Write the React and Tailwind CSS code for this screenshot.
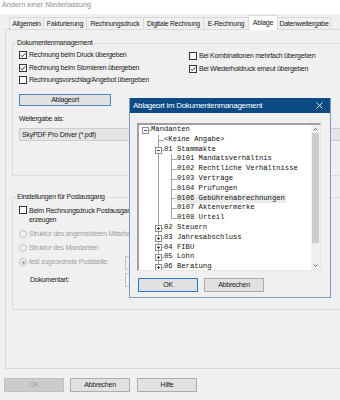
import React from 'react';

function Check({ checked }) {
  return (
    <span className="flex h-[8px] w-[8px] shrink-0 items-center justify-center border border-[#333333] bg-white">
      {checked && (
        <svg width="6" height="6" viewBox="0 0 6 6">
          <path d="M0.6 3.1 L2.3 4.7 L5.4 1.2" fill="none" stroke="#222222" strokeWidth="0.9" />
        </svg>
      )}
    </span>
  );
}

function CheckRow({ checked, children }) {
  return (
    <div className="flex h-[12.5px] items-center gap-[2px]">
      <Check checked={checked} />
      <span className="whitespace-nowrap leading-[10px]">{children}</span>
    </div>
  );
}

function Radio({ checked }) {
  return (
    <span className="flex h-[8px] w-[8px] shrink-0 items-center justify-center rounded-full border border-[#c2c2c2] bg-[#f0f0f0]">
      {checked && <span className="h-[3px] w-[3px] rounded-full bg-[#a6a6a6]" />}
    </span>
  );
}

const rows = [
  { l: 0, t: 'Mandanten', box: 'minus' },
  { l: 1, t: '<Keine Angabe>' },
  { l: 1, t: '01 Stammakte', box: 'minus' },
  { l: 2, t: '0101 Mandatsverhältnis' },
  { l: 2, t: '0102 Rechtliche Verhältnisse' },
  { l: 2, t: '0103 Verträge' },
  { l: 2, t: '0104 Prüfungen' },
  { l: 2, t: '0106 Gebührenabrechnungen', sel: true },
  { l: 2, t: '0107 Aktenvermerke' },
  { l: 2, t: '0108 Urteil', last: true },
  { l: 1, t: '02 Steuern', box: 'plus' },
  { l: 1, t: '03 Jahresabschluss', box: 'plus' },
  { l: 1, t: '04 FIBU', box: 'plus' },
  { l: 1, t: '05 Lohn', box: 'plus' },
  { l: 1, t: '06 Beratung', box: 'plus' },
];

function Conn({ r }) {
  const W = 12 + 13 * r.l;
  const J = 6 + 13 * r.l + 0.5;
  const line = '#a3a3a3';
  const els = [];
  if (r.l === 2) els.push(<line key="a" x1={19.5} y1={-0.5} x2={19.5} y2={10.5} stroke={line} />);
  if (r.box) {
    if (r.l > 0) {
      els.push(<line key="u" x1={J} y1={-0.5} x2={J} y2={2.5} stroke={line} />);
      els.push(<line key="d" x1={J} y1={8.5} x2={J} y2={10.5} stroke={line} />);
    }
    els.push(<line key="h" x1={J + 3.5} y1={5.5} x2={W - 0.5} y2={5.5} stroke={line} />);
    els.push(<rect key="b" x={J - 3} y={2.5} width={6} height={6} fill="#ffffff" stroke="#8e8e8e" />);
    els.push(<line key="m" x1={J - 1.5} y1={5.5} x2={J + 1.5} y2={5.5} stroke="#2f4f7a" />);
    if (r.box === 'plus') els.push(<line key="p" x1={J} y1={4} x2={J} y2={7} stroke="#2f4f7a" />);
  } else {
    els.push(<line key="v" x1={J} y1={-0.5} x2={J} y2={r.last ? 5.5 : 10.5} stroke={line} />);
    els.push(<line key="h" x1={J} y1={5.5} x2={W - 0.5} y2={5.5} stroke={line} />);
  }
  return (
    <svg width={W} height={10} className="shrink-0 overflow-visible" shapeRendering="crispEdges">
      {els}
    </svg>
  );
}

const tabs = [
  { t: 'Allgemein', w: 'w-[34px] border-l' },
  { t: 'Fakturierung', w: 'w-[43px] border-l' },
  { t: 'Rechnungsdruck', w: 'w-[57px] border-l' },
  { t: 'Digitale Rechnung', w: 'w-[60px] border-l' },
  { t: 'E-Rechnung', w: 'w-[45px] border-l' },
];

export default function App() {
  return (
    <div className="relative h-[400px] w-[340px] overflow-hidden bg-[#f0f0f0] font-['Liberation_Sans',Arial,sans-serif] text-[7px] tracking-[-0.25px] text-[#1b1b1b]">
      {/* window title */}
      <div className="h-[14px] bg-white pl-[2px] text-[7.2px] leading-[10px] tracking-normal text-[#8e8e8e]">
        Ändern einer Niederlassung
      </div>

      {/* tab strip */}
      <div className="flex h-[15px] items-end pl-[9px]">
        {tabs.map((tb) => (
          <div
            key={tb.t}
            className={'flex h-[12px] items-center justify-center whitespace-nowrap border-t border-[#d9d9d9] bg-[#f0f0f0] leading-[10px] ' + tb.w}
          >
            {tb.t}
          </div>
        ))}
        <div className="relative z-10 -mb-[1px] flex h-[15px] w-[30px] items-start justify-center border-x border-t border-[#d9d9d9] bg-white pt-[2px] leading-[10px]">
          Ablage
        </div>
        <div className="flex h-[12px] w-[53px] items-center justify-center whitespace-nowrap border-r border-t border-[#d9d9d9] leading-[10px]">
          Datenweitergabe
        </div>
      </div>

      {/* tab page */}
      <div className="ml-[5px] h-[340px] w-[340px] border border-[#d9d9d9] bg-[#f0f0f0] pl-[6px] pt-[8px]">
        <fieldset className="h-[138px] w-[330px] border border-[#dcdcdc]">
          <legend className="ml-[3px] px-[1px] leading-[10px]">Dokumentenmanagement</legend>
          <div className="pl-[6px] pt-[1px]">
            <div className="flex">
              <div className="w-[170px]">
                <CheckRow checked>Rechnung beim Druck übergeben</CheckRow>
                <CheckRow checked>Rechnung beim Stornieren übergeben</CheckRow>
                <CheckRow>Rechnungsvorschlag/Angebot übergeben</CheckRow>
              </div>
              <div className="pt-[1px]">
                <CheckRow>Bei Kombinationen mehrfach übergeben</CheckRow>
                <CheckRow checked>Bei Wiederholdruck erneut übergeben</CheckRow>
              </div>
            </div>
            <div className="mt-[7.5px] flex h-[12px] w-[92px] items-center justify-center border border-[#4b86c0] bg-[#e1e1e1] leading-[10px]">
              Ablageort
            </div>
            <div className="mt-[7px] h-[12px] leading-[12px]">Weitergabe als:</div>
            <div className="mt-[3px] flex h-[13px] w-[330px] items-center border border-[#cccccc] bg-[#e5e5e5] pl-[2px] leading-[10px]">
              SkyPDF Pro Driver (*.pdf)
            </div>
          </div>
        </fieldset>

        <fieldset className="mt-[16px] h-[118px] w-[330px] border border-[#dcdcdc]">
          <legend className="ml-[3px] px-[1px] leading-[10px]">Einstellungen für Postausgang</legend>
          <div className="pl-[6px]">
            <div className="mt-[3.5px] flex items-start gap-[2px]">
              <span className="mt-[0.5px]">
                <Check />
              </span>
              <span className="whitespace-nowrap leading-[9px]">
                Beim Rechnungsdruck Postausgang
                <br />
                erzeugen
              </span>
            </div>
            <div className="mt-[3.5px] text-[#a2a2a2]">
              <div className="flex h-[14px] items-center gap-[2px]">
                <Radio />
                <span className="whitespace-nowrap">Struktur des angemeldeten Mitarbeiters</span>
              </div>
              <div className="flex h-[14px] items-center gap-[2px]">
                <Radio />
                <span className="whitespace-nowrap">Struktur des Mandanten</span>
              </div>
              <div className="flex h-[14px] items-center">
                <div className="flex w-[106px] items-center gap-[2px]">
                  <Radio checked />
                  <span className="whitespace-nowrap">fest zugeordnete Poststelle:</span>
                </div>
                <div className="mt-[1px] h-[14px] w-[200px] border border-[#c4c4c4] bg-[#f0f0f0]" />
              </div>
            </div>
            <div className="mt-[4px] flex h-[14px] items-center">
              <div className="w-[106px] pl-[11px]">Dokumentart:</div>
              <div className="h-[14px] w-[200px] border border-[#c4c4c4] bg-[#f0f0f0]" />
            </div>
          </div>
        </fieldset>
      </div>

      {/* bottom buttons */}
      <div className="mt-[9px] flex pl-[4px]">
        <div className="flex h-[14px] w-[60px] items-center justify-center border border-[#bfbfbf] bg-[#cccccc] text-[#a0a0a0]">OK</div>
        <div className="ml-[6px] flex h-[14px] w-[60px] items-center justify-center border border-[#adadad] bg-[#e1e1e1]">Abbrechen</div>
        <div className="ml-[7px] flex h-[14px] w-[60px] items-center justify-center border border-[#adadad] bg-[#e1e1e1]">Hilfe</div>
      </div>

      {/* modal dialog */}
      <div className="absolute left-[129px] top-[98px] flex h-[200px] w-[202px] flex-col border-x border-b border-[#7b9cc0] bg-[#f0f0f0]">
        <div className="flex h-[15px] shrink-0 items-center justify-between bg-[#0c4a84] pl-[3px] pr-[7px] text-[8px] tracking-[-0.3px] text-white">
          <span className="whitespace-nowrap leading-[15px]">Ablageort im Dokumentenmanagement</span>
          <svg width="7" height="7" viewBox="0 0 7 7">
            <path d="M0.5 0.5 L6.5 6.5 M6.5 0.5 L0.5 6.5" stroke="#ffffff" strokeWidth="0.9" />
          </svg>
        </div>

        <div className="ml-[7px] mt-[10px] flex h-[148px] w-[184px] border-b border-l-2 border-r border-t-2 border-b-[#e6e6e6] border-l-[#a0a0a0] border-r-[#e6e6e6] border-t-[#a0a0a0] bg-white">
          <div className="flex-1 overflow-hidden font-['Liberation_Mono','Courier_New',monospace] text-[7.2px] tracking-normal text-[#111111]">
            {rows.map((r, i) => (
              <div key={i} className="flex h-[9.8px] items-center">
                <Conn r={r} />
                <span
                  className={
                    r.sel
                      ? '-ml-[2px] whitespace-pre bg-[#ebebeb] pl-[2px] pr-[1px] leading-[9.8px]'
                      : 'whitespace-pre leading-[9.8px]'
                  }
                >
                  {r.t}
                </span>
              </div>
            ))}
          </div>
          <div className="flex w-[9px] shrink-0 flex-col bg-[#f0f0f0]">
            <div className="flex h-[8px] items-center justify-center">
              <svg width="5" height="3" viewBox="0 0 5 3">
                <path d="M0.5 2.5 L2.5 0.6 L4.5 2.5" fill="none" stroke="#606060" strokeWidth="1" />
              </svg>
            </div>
            <div className="mx-[1px] h-[110px] bg-[#cdcdcd]" />
            <div className="flex-1" />
            <div className="flex h-[9px] items-center justify-center">
              <svg width="5" height="3" viewBox="0 0 5 3">
                <path d="M0.5 0.5 L2.5 2.4 L4.5 0.5" fill="none" stroke="#606060" strokeWidth="1" />
              </svg>
            </div>
          </div>
        </div>

        <div className="ml-[8px] mt-[7px] flex">
          <div className="flex h-[14px] w-[60px] items-center justify-center border border-[#2a78cc] bg-[#e1e1e1]">OK</div>
          <div className="ml-[6px] flex h-[14px] w-[60px] items-center justify-center border border-[#adadad] bg-[#e1e1e1]">Abbrechen</div>
        </div>
      </div>
    </div>
  );
}
